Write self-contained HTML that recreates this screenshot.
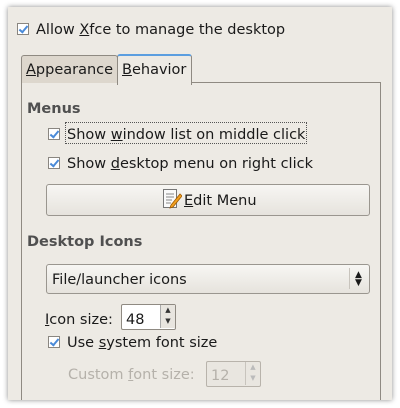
<!DOCTYPE html>
<html><head><style>
body{margin:0;width:400px;height:408px;background:#fff;position:relative;overflow:hidden;font-family:"DejaVu Sans","Liberation Sans",sans-serif;font-size:14.5px;color:#1a1a1a}
.win{position:absolute;left:8px;top:7px;width:384px;height:393px;background:#edeae4;box-shadow:0 0 5px rgba(0,0,0,.45)}
.a{position:absolute;white-space:nowrap}
.t{margin-top:3px}
.cb{position:absolute;width:10px;height:10px;border:1px solid #8a8680;background:#fff}
.cb:after{content:"";position:absolute;left:3px;top:0px;width:3px;height:7px;border:solid #4a8ad8;border-width:0 2px 2px 0;transform:rotate(40deg)}
u{text-decoration:underline}
.h{font-weight:bold;color:#505050}
.btn{position:absolute;border:1px solid #9a968f;border-radius:3px;background:linear-gradient(#f7f6f3,#e6e3dd)}
</style></head><body>
<div class="win"></div>
<div class="cb" style="left:17px;top:23px"></div>
<div class="a t" style="left:36px;top:19px">Allow <u>X</u>fce to manage the desktop</div>
<div class="a" style="left:21px;top:82px;width:358px;height:317px;border:1px solid #8f8a82;border-bottom:none"></div>
<div class="a" style="left:21px;top:55px;width:95px;height:27px;background:#ddd7cd;border:1px solid #8f8a82;border-bottom:none;border-radius:3px 3px 0 0"></div>
<div class="a t" style="left:26px;top:59px"><u>A</u>ppearance</div>
<div class="a" style="left:117px;top:54px;width:73px;height:29px;background:#edeae4;border:1px solid #8f8a82;border-top:2px solid #5b9ee0;border-bottom:none;border-radius:3px 3px 0 0"></div>
<div class="a t" style="left:122px;top:59px"><u>B</u>ehavior</div>
<div class="a h t" style="left:27px;top:98px">Menus</div>
<div class="cb" style="left:48px;top:128px"></div>
<div class="a" style="left:65px;top:122px;width:240px;height:20px;border:1px dotted #555"></div>
<div class="a t" style="left:67px;top:124px">Show <u>w</u>indow list on middle click</div>
<div class="cb" style="left:48px;top:157px"></div>
<div class="a t" style="left:67px;top:153px">Show <u>d</u>esktop menu on right click</div>
<div class="btn" style="left:46px;top:184px;width:322px;height:30px"></div>
<svg class="a" style="left:162px;top:188px" width="20" height="22" viewBox="0 0 20 22"><rect x="1.5" y="1.5" width="13" height="18" fill="#fafafa" stroke="#777"/><path d="M4 6h8M4 9h8M4 12h6M4 15h5" stroke="#888"/><path d="M9 17l9-11 2 2-9 11-3 1z" fill="#f0a020" stroke="#a05a00" stroke-width=".8"/></svg>
<div class="a t" style="left:184px;top:190px"><u>E</u>dit Menu</div>
<div class="a h t" style="left:27px;top:231px">Desktop Icons</div>
<div class="btn" style="left:46px;top:264px;width:322px;height:28px"></div>
<div class="a t" style="left:52px;top:269px">File/launcher icons</div>
<div class="a" style="left:349px;top:268px;width:1px;height:21px;background:#c8c4bd"></div>
<div class="a" style="left:355px;top:271px;font-size:9px;line-height:8px">▲<br>▼</div>
<div class="a t" style="left:45px;top:309px"><u>I</u>con size:</div>
<div class="a" style="left:121px;top:304px;width:53px;height:24px;border:1px solid #8f8a82;background:#fff;border-radius:2px"></div>
<div class="a t" style="left:126px;top:309px">48</div>
<div class="a" style="left:160px;top:305px;width:14px;height:23px;background:#e8e5df;border-left:1px solid #aaa;font-size:7px;line-height:11px;text-align:center;color:#333">▲<br>▼</div>
<div class="cb" style="left:48px;top:336px"></div>
<div class="a t" style="left:67px;top:332px">Use <u>s</u>ystem font size</div>
<div class="a t" style="left:68px;top:364px;color:#b5b1aa">Custom <u>f</u>ont size:</div>
<div class="a" style="left:206px;top:361px;width:53px;height:24px;border:1px solid #b8b3ab;background:#e9e6e0;border-radius:2px"></div>
<div class="a t" style="left:211px;top:365px;color:#b5b1aa">12</div>
<div class="a" style="left:245px;top:362px;width:14px;height:23px;border-left:1px solid #c8c4bd;font-size:7px;line-height:11px;text-align:center;color:#bbb">▲<br>▼</div>
</body></html>
